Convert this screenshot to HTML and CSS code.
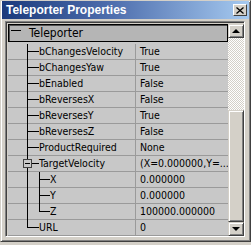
FILE: index.html
```html
<!DOCTYPE html>
<html lang="en">
<head>
    <meta charset="UTF-8">
    <title>Teleporter Properties</title>
    <link rel="stylesheet" href="styles.css">
</head>
<body>

<div class="window">
    <div class="titlebar">
        <span class="title">Teleporter Properties</span>
        <div class="close">
            <svg width="8" height="7" viewBox="0 0 8 7"><path d="M0.5 0.5 L7.5 6.5 M7.5 0.5 L0.5 6.5" stroke="#000" stroke-width="1.3" fill="none"/></svg>
        </div>
    </div>

    <div class="frame">
        <div class="grid">
            <div class="cat">
                <span class="minus"></span>
                <span class="cat-name">Teleporter</span>
            </div>

            <div class="row"><div class="name"><span class="tree t-mid"></span>bChangesVelocity</div><div class="value">True</div></div>
            <div class="row"><div class="name"><span class="tree t-mid"></span>bChangesYaw</div><div class="value">True</div></div>
            <div class="row"><div class="name"><span class="tree t-mid"></span>bEnabled</div><div class="value">False</div></div>
            <div class="row"><div class="name"><span class="tree t-mid"></span>bReversesX</div><div class="value">False</div></div>
            <div class="row"><div class="name"><span class="tree t-mid"></span>bReversesY</div><div class="value">True</div></div>
            <div class="row"><div class="name"><span class="tree t-mid"></span>bReversesZ</div><div class="value">False</div></div>
            <div class="row"><div class="name"><span class="tree t-mid"></span>ProductRequired</div><div class="value">None</div></div>
            <div class="row"><div class="name"><span class="tree t-open"><span class="box"></span></span>TargetVelocity</div><div class="value">(X=0.000000,Y=...</div></div>
            <div class="row"><div class="name"><span class="tree t-sub"></span>X</div><div class="value">0.000000</div></div>
            <div class="row"><div class="name"><span class="tree t-sub"></span>Y</div><div class="value">0.000000</div></div>
            <div class="row"><div class="name"><span class="tree t-sub-last"></span>Z</div><div class="value">100000.000000</div></div>
            <div class="row"><div class="name"><span class="tree t-last"></span>URL</div><div class="value">0</div></div>
        </div>

        <div class="scrollbar">
            <div class="sbtn"><span class="arrow-up"></span></div>
            <div class="track">
                <div class="thumb"></div>
            </div>
            <div class="sbtn"><span class="arrow-down"></span></div>
        </div>
    </div>
</div>

</body>
</html>
```

FILE: styles.css
```css
body {
    margin: 0;
    background: #d4d0c8;
    font-family: "DejaVu Sans Condensed", "Liberation Sans", Arial, sans-serif;
    font-size: 10.5px;
    color: #000;
}

/* Fensterrahmen */
.window {
    width: 251px;
    height: 242px;
    box-sizing: border-box;
    border: 1px solid;
    border-color: #d4d0c8 #404040 #404040 #d4d0c8;
    box-shadow: inset 1px 1px #fff, inset -1px -1px #808080;
    padding: 0 1px 0 1px;
}

.titlebar {
    height: 18px;
    display: flex;
    align-items: center;
    background: linear-gradient(to right, #1b3a7c, #4f6fae 45%, #a6caf0);
    padding-left: 4px;
}

.title {
    flex: 1;
    color: #fff;
    font-family: "Liberation Sans", Arial, sans-serif;
    font-weight: bold;
    font-size: 12px;
}

.close {
    width: 12px;
    height: 10px;
    margin-right: 2px;
    background: #d4d0c8;
    border: 1px solid;
    border-color: #fff #404040 #404040 #fff;
    display: flex;
    align-items: center;
    justify-content: center;
}

.close svg {
    display: block;
}

/* eingelassener Bereich mit Liste + Scrollbar */
.frame {
    display: flex;
    width: 240px;
    height: 216px;
    box-sizing: border-box;
    margin: 2px 0 0 3px;
    padding: 2px 0 0 2px;
    border: 1px solid;
    border-color: #808080 #fff #fff #808080;
    box-shadow: inset 1px 1px #404040;
    background: #d4d0c8;
}

.grid {
    width: 220px;
    height: 212px;
    background: #c8c8c8;
}

.cat {
    height: 16px;
    display: flex;
    align-items: center;
    border: 1px solid #000;
    box-shadow: inset 1px 1px #505050;
    background: #b5b5b5;
    margin-bottom: 2px;
}

/* Minus-Zeichen als Hintergrund, feste Breite bis zum Text */
.minus {
    flex: none;
    width: 20px;
    height: 16px;
    background: linear-gradient(#000, #000) 2px 5px / 10px 1px no-repeat;
}

.cat-name {
    font-size: 12px;
}

.row {
    display: flex;
    height: 15px;
    border-bottom: 1px solid #9a9a9a;
    line-height: 15px;
}

.name {
    width: 127px;
    flex: none;
    display: flex;
    align-items: flex-start;
    border-right: 1px solid #9a9a9a;
    white-space: nowrap;
}

.value {
    flex: 1;
    padding-left: 4px;
    white-space: nowrap;
    overflow: hidden;
}

/* Baumlinien, ragen 1px ueber die Zeilenlinie */
.tree {
    flex: none;
    width: 31px;
    height: 16px;
    background-repeat: no-repeat;
}

.t-mid {
    background-image: linear-gradient(#000, #000), linear-gradient(#000, #000);
    background-position: 19px 0, 20px 7px;
    background-size: 1px 16px, 11px 1px;
}

.t-last {
    background-image: linear-gradient(#000, #000), linear-gradient(#000, #000);
    background-position: 19px 0, 20px 7px;
    background-size: 1px 8px, 11px 1px;
}

.t-open {
    display: flex;
    align-items: flex-start;
    background-image: linear-gradient(#000, #000), linear-gradient(#000, #000);
    background-position: 19px 0, 24px 7px;
    background-size: 1px 16px, 7px 1px;
}

.box {
    width: 7px;
    height: 7px;
    margin: 3px 0 0 15px;
    border: 1px solid #404040;
    background: #c8c8c8 linear-gradient(#000, #000) 1px 3px / 5px 1px no-repeat;
}

.t-sub {
    width: 42px;
    background-image: linear-gradient(#000, #000), linear-gradient(#000, #000), linear-gradient(#000, #000);
    background-position: 19px 0, 31px 0, 32px 7px;
    background-size: 1px 16px, 1px 16px, 10px 1px;
}

.t-sub-last {
    width: 42px;
    background-image: linear-gradient(#000, #000), linear-gradient(#000, #000), linear-gradient(#000, #000);
    background-position: 19px 0, 31px 0, 32px 7px;
    background-size: 1px 16px, 1px 8px, 10px 1px;
}

/* Scrollbar */
.scrollbar {
    width: 16px;
    height: 212px;
    display: flex;
    flex-direction: column;
}

.sbtn,
.thumb {
    box-sizing: border-box;
    background: #d4d0c8;
    border: 1px solid;
    border-color: #d4d0c8 #404040 #404040 #d4d0c8;
    box-shadow: inset 1px 1px #fff, inset -1px -1px #808080;
}

.sbtn {
    height: 14px;
    display: flex;
    align-items: center;
    justify-content: center;
}

.arrow-up {
    width: 0;
    height: 0;
    border-left: 4px solid transparent;
    border-right: 4px solid transparent;
    border-bottom: 4px solid #000;
}

.arrow-down {
    width: 0;
    height: 0;
    border-left: 4px solid transparent;
    border-right: 4px solid transparent;
    border-top: 4px solid #000;
}

.track {
    flex: 1;
    display: flex;
    flex-direction: column;
    justify-content: flex-end;
    background: repeating-conic-gradient(#fff 0 25%, #d4d0c8 0 50%) 0 0 / 2px 2px;
}

.thumb {
    height: 112px;
}
```
